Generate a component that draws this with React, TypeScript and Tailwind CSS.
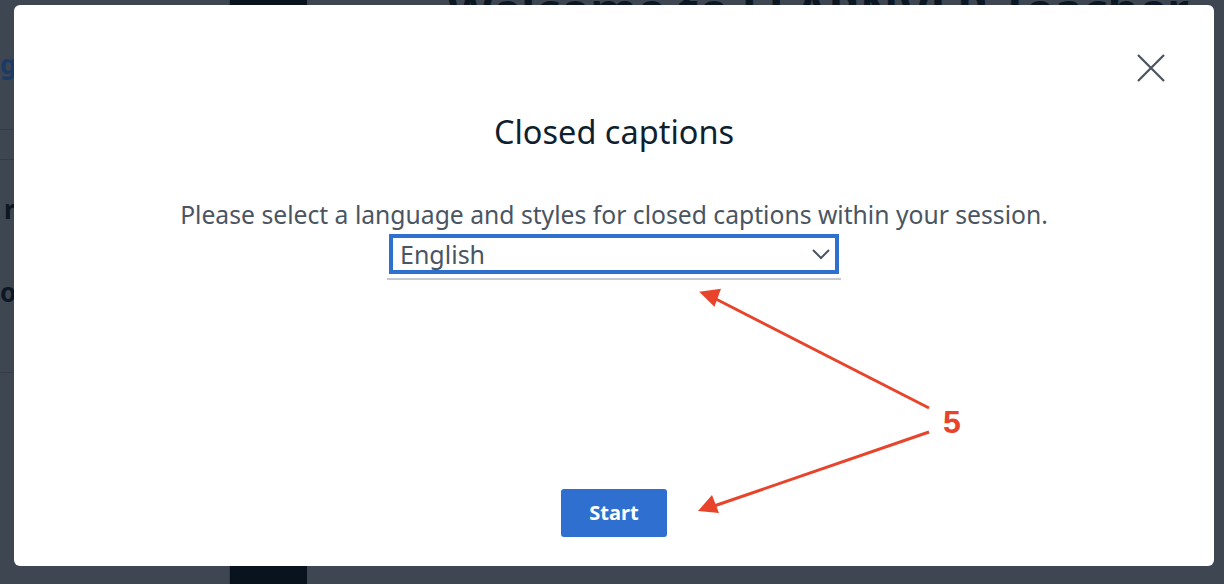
import React from "react";

const font = { fontFamily: '"Source Sans Pro", "Noto Sans", "Open Sans", sans-serif' };

function Backdrop() {
  return (
    <div className="absolute inset-0 flex bg-[#3e4651]">
      <div className="w-[230px] flex flex-col border-r border-[#343b45]">
        <div className="h-[130px] border-b border-[#353c46] flex items-center">
          <span className="text-[26px] font-bold text-[#1b3a66]">gB</span>
        </div>
        <div className="h-[30px] border-b border-[#353c46]" />
        <div className="pt-[30px] pl-[4px] text-[26px] font-bold text-[#0c1724]">r</div>
        <div className="pt-[44px] text-[26px] font-bold text-[#0c1724]">o</div>
        <div className="mt-[60px] border-b border-[#353c46]" />
      </div>
      <div className="w-[77px] bg-[#08131e]" />
      <div className="flex-1 flex flex-col">
        <div className="h-[40px] -mt-[26px] pl-[140px] text-[48px] font-bold text-[#0c1724] whitespace-nowrap">
          Welcome to LEARNVER Teacher
        </div>
      </div>
    </div>
  );
}

function Arrow() {
  return (
    <svg className="absolute left-0 top-0 pointer-events-none" width="1224" height="584">
      <g stroke="#e8442c" strokeWidth="3" fill="none">
        <line x1="929" y1="408" x2="712" y2="297" />
        <line x1="929" y1="432" x2="714" y2="506" />
      </g>
      <path d="M700 291 L722 291 L713 308 Z" fill="#e8442c" transform="rotate(-8 705 297)" />
      <path d="M698 511 L712 495 L719 513 Z" fill="#e8442c" />
    </svg>
  );
}

export default function App() {
  return (
    <div className="relative w-[1224px] h-[584px] overflow-hidden" style={font}>
      <Backdrop />
      <div className="absolute left-[14px] top-[5px] w-[1200px] h-[561px] bg-white rounded-[6px] flex flex-col items-center">
        <button className="absolute right-[48px] top-[48px] w-[30px] h-[30px] flex items-center justify-center">
          <svg width="30" height="30" viewBox="0 0 30 30">
            <path d="M2 2 L28 28 M28 2 L2 28" stroke="#4a535f" strokeWidth="2.2" />
          </svg>
        </button>
        <h2 className="mt-[107px] text-[32.5px] leading-[40px] text-[#0f1f30]">Closed captions</h2>
        <p className="mt-[47px] text-[24.7px] leading-[32px] text-[#4a5562]">
          Please select a language and styles for closed captions within your session.
        </p>
        <div className="mt-[3px] w-[454px] border-b-2 border-[#c5c9ce] pb-[4px]">
          <div className="ml-[2px] w-[450px] h-[40px] border-4 border-[#2f6fce] flex items-center justify-between pl-[7px] pr-[4px]">
            <span className="text-[25px] leading-[30px] text-[#4a5562]">English</span>
            <svg width="20" height="12" viewBox="0 0 20 12">
              <path d="M2 2 L10 10 L18 2" stroke="#4a5562" strokeWidth="2" fill="none" />
            </svg>
          </div>
        </div>
        <button className="mt-[209px] w-[106px] h-[48px] rounded-[3px] bg-[#2f6fd0] text-white text-[20px] font-bold">
          Start
        </button>
      </div>
      <Arrow />
      <div className="absolute left-[943px] top-[404px] text-[32px] font-bold leading-[36px] text-[#e8442c]" style={{ fontFamily: '"Liberation Sans", Arial, sans-serif' }}>
        5
      </div>
    </div>
  );
}
